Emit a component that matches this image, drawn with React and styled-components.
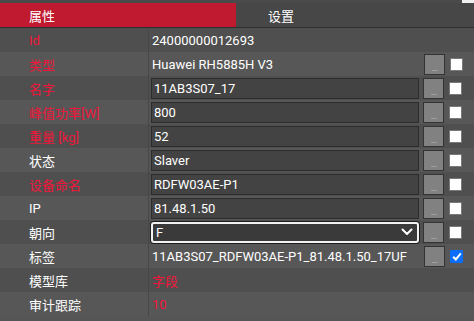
import React from "react";
import styled, { createGlobalStyle } from "styled-components";

const Global = createGlobalStyle`
  html, body { margin: 0; padding: 0; background: #555555; }
  body { font-family: Roboto, "Noto Sans CJK SC", sans-serif; font-size: 13px; }
`;

const Panel = styled.div`
  width: 474px;
  height: 321px;
  background: #555555;
  overflow: hidden;
  display: flex;
  flex-direction: column;
`;

const TopStrip = styled.div`
  height: 3px;
  background: #4a4a4a;
  display: flex;
  justify-content: flex-end;
`;

const StripMark = styled.div`
  width: 12px;
  background: #f0f0f0;
`;

const Tabs = styled.div`
  display: grid;
  grid-template-columns: 236px 1fr;
  height: 24px;
  border-bottom: 1px solid #2f2f2f;
  background: #474747;
`;

const Tab = styled.div`
  display: flex;
  align-items: center;
  padding-left: ${(p) => (p.$active ? "29px" : "32px")};
  color: #ffffff;
  font-size: 13px;
  background: ${(p) => (p.$active ? "#c01a31" : "#474747")};
`;

const Row = styled.div`
  display: grid;
  grid-template-columns: 149px 1fr;
  height: 24px;
  background: ${(p) => (p.$alt ? "#575757" : "#4f4f4f")};
`;

const Label = styled.div`
  display: flex;
  align-items: center;
  padding-left: 29px;
  color: ${(p) => (p.$red ? "#f0163b" : "#ffffff")};
  border-right: 1px solid #474747;
  white-space: nowrap;
`;

const ValueCell = styled.div`
  display: flex;
  align-items: center;
  padding-left: 2px;
  gap: 4px;
`;

const Plain = styled.div`
  flex: 0 0 268px;
  padding-left: 1px;
  color: ${(p) => (p.$red ? "#f0163b" : "#ffffff")};
  white-space: nowrap;
`;

const Input = styled.div`
  flex: 0 0 268px;
  box-sizing: border-box;
  height: 21px;
  background: #434343;
  border: 1px solid #2c2c2c;
  display: flex;
  align-items: center;
  padding-left: 2px;
  color: #ffffff;
`;

const Select = styled.div`
  flex: 0 0 268px;
  box-sizing: border-box;
  height: 21px;
  background: #3a3a3a;
  border: 2px solid #f2f2f2;
  border-radius: 3px;
  box-shadow: 0 0 0 1px #1e1e1e;
  display: flex;
  align-items: center;
  justify-content: space-between;
  padding: 0 4px 0 3px;
  color: #ffffff;
`;

const DotsButton = styled.div`
  box-sizing: border-box;
  width: 21px;
  height: 21px;
  background: #818181;
  border: 1px solid #333333;
  display: flex;
  align-items: flex-end;
  justify-content: center;
  color: #cfcfcf;
  font-size: 9px;
  line-height: 12px;
  letter-spacing: -0.5px;
`;

const Check = styled.div`
  box-sizing: border-box;
  width: 13px;
  height: 13px;
  margin-left: 1px;
  border-radius: 1px;
  background: ${(p) => (p.$checked ? "#0b6ef8" : "#ffffff")};
  border: 1px solid ${(p) => (p.$checked ? "#0b6ef8" : "#7a7a7a")};
  display: flex;
  align-items: center;
  justify-content: center;
`;

const rows = [
  { label: "Id", red: true, value: "24000000012693", kind: "plain" },
  { label: "类型", red: true, value: "Huawei RH5885H V3", kind: "plain", tools: true },
  { label: "名字", red: true, value: "11AB3S07_17", kind: "input", tools: true },
  { label: "峰值功率[W]", red: true, value: "800", kind: "input", tools: true },
  { label: "重量 [kg]", red: true, value: "52", kind: "input", tools: true },
  { label: "状态", value: "Slaver", kind: "input", tools: true },
  { label: "设备命名", red: true, value: "RDFW03AE-P1", kind: "input", tools: true },
  { label: "IP", value: "81.48.1.50", kind: "input", tools: true },
  { label: "朝向", value: "F", kind: "select", tools: true },
  { label: "标签", value: "11AB3S07_RDFW03AE-P1_81.48.1.50_17UF", kind: "plain", tools: true, checked: true },
  { label: "模型库", value: "字段", kind: "plain", valueRed: true },
  { label: "审计跟踪", value: "10", kind: "plain", valueRed: true },
];

function Chevron() {
  return (
    <svg width="12" height="8" viewBox="0 0 12 8">
      <path d="M1.5 1.5 L6 6 L10.5 1.5" fill="none" stroke="#ffffff" strokeWidth="2" strokeLinecap="round" strokeLinejoin="round" />
    </svg>
  );
}

function Tick() {
  return (
    <svg width="10" height="9" viewBox="0 0 10 9">
      <path d="M1.2 4.8 L3.8 7.4 L8.8 1.4" fill="none" stroke="#ffffff" strokeWidth="2" />
    </svg>
  );
}

function Value({ row }) {
  if (row.kind === "input") return <Input>{row.value}</Input>;
  if (row.kind === "select")
    return (
      <Select>
        <span>{row.value}</span>
        <Chevron />
      </Select>
    );
  return <Plain $red={row.valueRed}>{row.value}</Plain>;
}

export default function App() {
  return (
    <>
      <Global />
      <Panel>
        <TopStrip>
          <StripMark />
        </TopStrip>
        <Tabs>
          <Tab $active>属性</Tab>
          <Tab>设置</Tab>
        </Tabs>
        {rows.map((row, i) => (
          <Row key={row.label} $alt={i % 2 === 1}>
            <Label $red={row.red}>{row.label}</Label>
            <ValueCell>
              <Value row={row} />
              {row.tools && (
                <>
                  <DotsButton>...</DotsButton>
                  <Check $checked={row.checked}>{row.checked && <Tick />}</Check>
                </>
              )}
            </ValueCell>
          </Row>
        ))}
      </Panel>
    </>
  );
}
